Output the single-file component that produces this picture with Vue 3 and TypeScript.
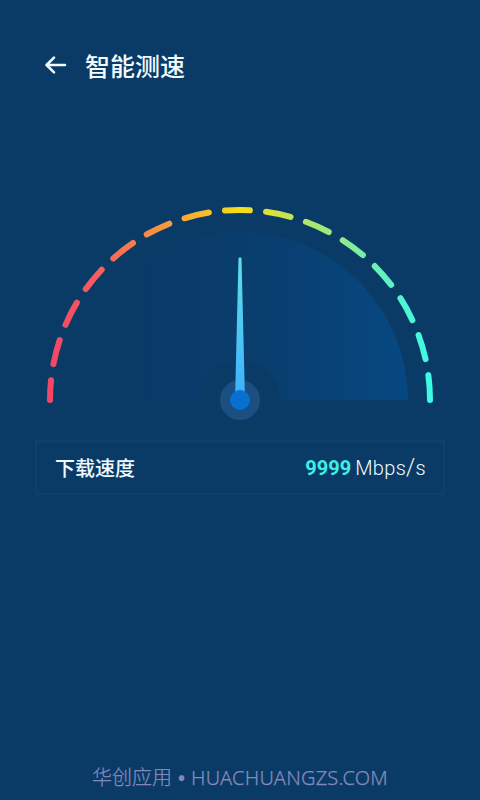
<script setup lang="ts">
const title = '智能测速'
const label = '下载速度'
const speed = 9999
</script>

<template>
  <main class="screen">
    <header class="bar">
      <svg class="back" viewBox="0 0 24 20" aria-hidden="true">
        <path d="M22 10H3.5M11 2.6L3.5 10L11 17.4" />
      </svg>
      <h1 class="title">{{ title }}</h1>
    </header>

    <svg class="gauge" viewBox="0 0 480 240" aria-hidden="true">
      <defs>
        <linearGradient id="scale" gradientUnits="userSpaceOnUse" x1="50" y1="0" x2="430" y2="0">
          <stop offset="0" stop-color="#f24667" />
          <stop offset="0.12" stop-color="#f65c60" />
          <stop offset="0.5" stop-color="#f6dc1a" />
          <stop offset="0.88" stop-color="#60f2c0" />
          <stop offset="1" stop-color="#3cfae6" />
        </linearGradient>
        <linearGradient id="dial" x1="0" y1="0" x2="1" y2="0">
          <stop offset="0.15" stop-color="#074780" stop-opacity="0" />
          <stop offset="0.5" stop-color="#07457c" stop-opacity="0.3" />
          <stop offset="1" stop-color="#074882" />
        </linearGradient>
        <linearGradient id="needle" x1="0" y1="0" x2="0" y2="1">
          <stop offset="0" stop-color="#5fe0e6" />
          <stop offset="0.65" stop-color="#4ac0f8" />
          <stop offset="1" stop-color="#3badfb" />
        </linearGradient>
      </defs>
      <path d="M72 220A168 168 0 0 1 408 220Z" fill="url(#dial)" />
      <path class="well" d="M200 220A40 40 0 0 1 280 220Z" />
      <path class="ticks" d="M430 220A190 190 0 0 0 50 220" stroke="url(#scale)" />
      <circle class="halo" cx="240" cy="220" r="20" />
      <path d="M238.5 78.5Q240 76 241.5 78.5L245 220H235Z" fill="url(#needle)" />
      <circle class="hub" cx="240" cy="220" r="10" />
    </svg>

    <section class="result">
      <span class="label">{{ label }}</span>
      <span class="value"><b class="number">{{ speed }}</b><span class="unit">Mbps<span class="slash">/</span>s</span></span>
    </section>

    <footer class="credit"><span>华创应用</span><span class="dot">•</span><span class="site">HUACHUANGZS.COM</span></footer>
  </main>
</template>

<style>
body {
  background: #0a3a66;
}
</style>

<style scoped>
.screen {
  box-sizing: border-box;
  width: 480px;
  height: 800px;
  display: flex;
  flex-direction: column;
  padding-top: 45px;
  overflow: hidden;
  background: #0a3a66;
  color: #f0faff;
  font-family: Roboto, "Noto Sans CJK SC", sans-serif;
}

.bar {
  height: 40px;
  display: flex;
  align-items: center;
  gap: 18px;
  padding-left: 43px;
}

.back {
  width: 24px;
  height: 20px;
  fill: none;
  stroke: #f0faff;
  stroke-width: 2.6;
  stroke-linecap: round;
  stroke-linejoin: round;
}

.title {
  margin: 0;
  padding-top: 6px;
  font-size: 25px;
  line-height: 40px;
  font-weight: 500;
}

.gauge {
  flex: none;
  width: 480px;
  height: 240px;
  margin-top: 95px;
}

.ticks {
  fill: none;
  stroke-width: 6;
  stroke-linecap: round;
  stroke-dasharray: 25 16.2;
}

.well {
  fill: #0a3b67;
}

.halo {
  fill: #194f81;
}

.hub {
  fill: #0870d0;
}

.result {
  box-sizing: border-box;
  height: 55px;
  display: flex;
  align-items: center;
  justify-content: space-between;
  margin: 20px 35px 0;
  padding: 0 18px 0 19px;
  border: 2px solid #0b4070;
}

.label {
  margin-left: -1px;
  font-size: 20px;
  font-weight: 500;
}

.value {
  display: flex;
  align-items: baseline;
  gap: 4px;
  margin-right: -1px;
  font-size: 20px;
  line-height: 24px;
}

.number {
  color: #3eeee5;
  font-weight: 700;
}

.unit {
  font-weight: 300;
  letter-spacing: 0.3px;
}

.slash {
  font-size: 23px;
  line-height: 20px;
}

.credit {
  display: flex;
  justify-content: center;
  margin-top: auto;
  height: 44px;
  line-height: 43px;
  white-space: nowrap;
  color: #8489bd;
  font-family: "Noto Sans", "Noto Sans CJK SC", sans-serif;
  font-size: 20px;
  font-weight: 300;
  -webkit-text-stroke: 0.25px #8489bd;
}

.dot {
  width: 19px;
  text-align: center;
  font-weight: 600;
}

.site {
  letter-spacing: 0.2px;
}
</style>
